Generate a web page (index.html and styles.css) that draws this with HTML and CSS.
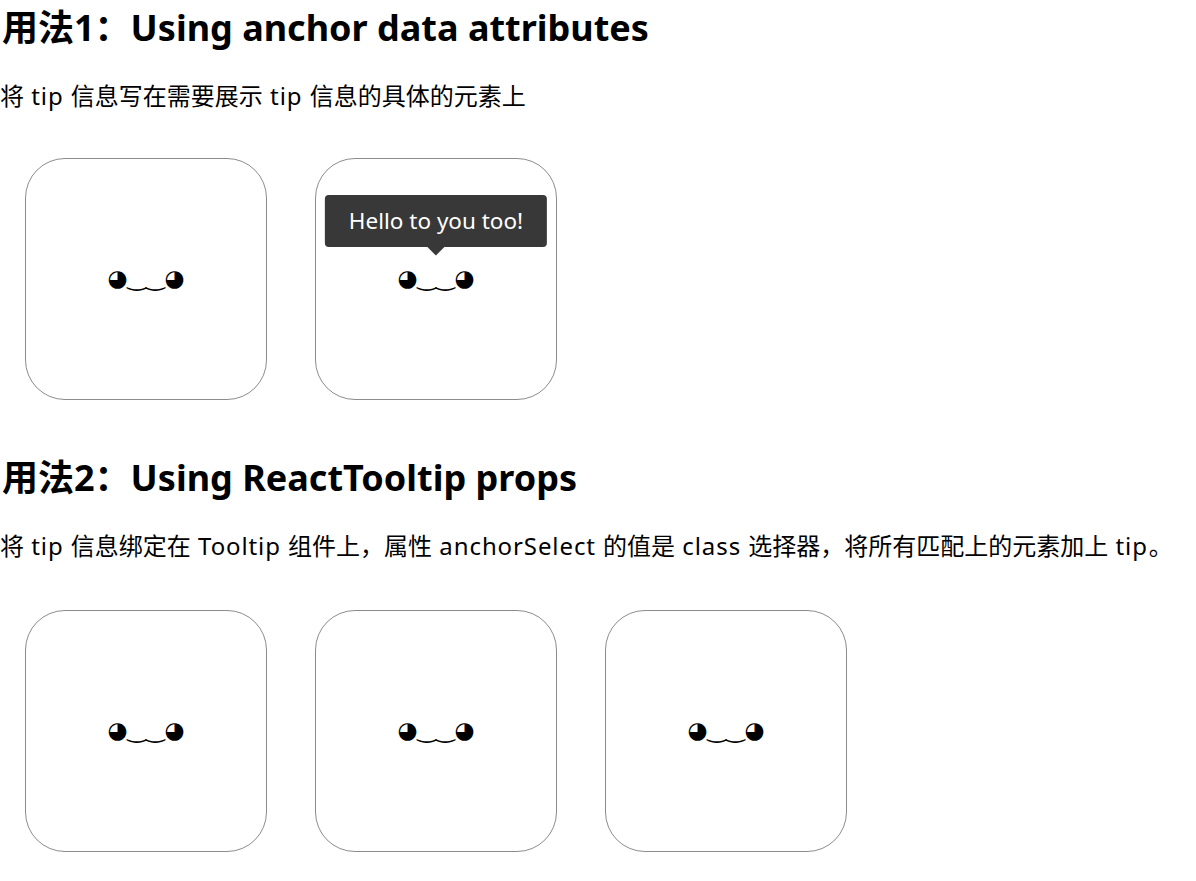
FILE: index.html
```html
<!DOCTYPE html>
<html lang="zh-CN">
<head>
<meta charset="utf-8">
<title>react-tooltip</title>
<link rel="stylesheet" href="styles.css">
</head>
<body>
  <section class="demo demo-first">
    <h2 class="title">用法1：Using anchor data attributes</h2>
    <p class="desc">将 <span class="en">tip</span> 信息写在需要展示 <span class="en">tip</span> 信息的具体的元素上</p>
    <div class="row">
      <a class="face-box"><span class="face">◕‿‿◕</span></a>
      <a class="face-box">
        <span class="face">◕‿‿◕</span>
        <span class="tooltip">Hello to you too!<span class="arrow"></span></span>
      </a>
    </div>
  </section>
  <section class="demo demo-second">
    <h2 class="title">用法2：Using ReactTooltip props</h2>
    <p class="desc">将 <span class="en">tip</span> 信息绑定在 <span class="en">Tooltip</span> 组件上，属性 <span class="en">anchorSelect</span> 的值是 <span class="en">class</span> 选择器，将所有匹配上的元素加上 <span class="en">tip</span>。</p>
    <div class="row">
      <a class="face-box"><span class="face">◕‿‿◕</span></a>
      <a class="face-box"><span class="face">◕‿‿◕</span></a>
      <a class="face-box"><span class="face">◕‿‿◕</span></a>
    </div>
  </section>
</body>
</html>
```
FILE: styles.css
```css
html, body {
  margin: 0;
  padding: 0;
  background: #fff;
  color: #000;
}
body {
  font-family: "Noto Sans", "Noto Sans CJK SC", sans-serif;
}
.demo {
  display: flex;
  flex-direction: column;
}
.title {
  margin: 4px 0 0 2px;
  font-size: 36px;
  line-height: 48px;
  font-weight: 700;
}
.desc {
  margin: 28px 0 0 0;
  font-size: 24px;
  line-height: 32px;
}
.desc .en {
  letter-spacing: 0.9px;
  margin: 0 1px;
}
.row {
  display: flex;
  gap: 48px;
  padding: 46px 0 0 25px;
}
.demo-second .title {
  margin-top: 54px;
}
.demo-second .row {
  padding-top: 48px;
}
.face-box {
  position: relative;
  width: 240px;
  height: 240px;
  border: 1px solid #8c8c8c;
  border-radius: 40px;
  display: flex;
  align-items: center;
  justify-content: center;
}
.face {
  font-family: "DejaVu Sans", sans-serif;
  font-size: 23px;
  line-height: 1;
  margin-bottom: 2px;
}
.tooltip {
  position: absolute;
  top: 36px;
  left: 50%;
  transform: translateX(-50%);
  padding: 12px 24px;
  background: #383838;
  color: #fff;
  border-radius: 4px;
  font-size: 22.5px;
  line-height: 28px;
  white-space: nowrap;
}
.arrow {
  position: absolute;
  left: 50%;
  bottom: -6px;
  width: 12px;
  height: 12px;
  margin-left: -6px;
  background: #383838;
  transform: rotate(45deg);
}
```
